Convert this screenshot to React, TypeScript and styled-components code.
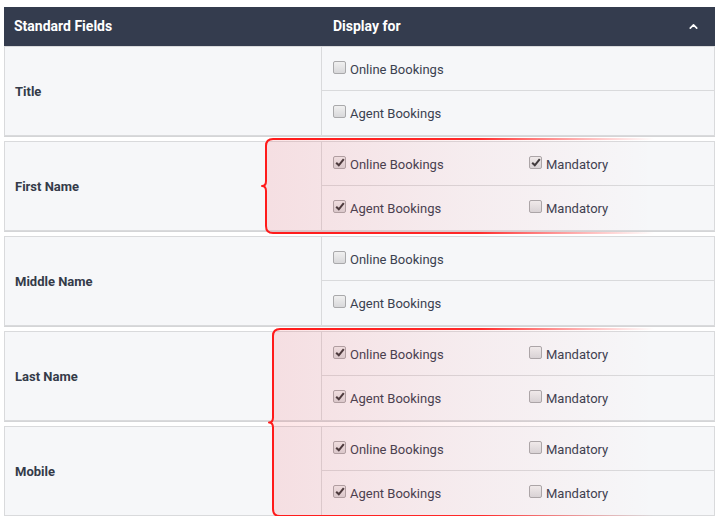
import React from 'react';
import styled, { createGlobalStyle } from 'styled-components';
import { ChevronUp } from 'lucide-react';

const GlobalStyle = createGlobalStyle`
  body {
    margin: 0;
    background: #ffffff;
    font-family: Roboto, "Liberation Sans", Arial, sans-serif;
  }
`;

const Page = styled.div`
  padding: 7px 6px 0 4px;
`;

const Table = styled.div`
  position: relative;
  width: 711px;
`;

const Header = styled.div`
  display: grid;
  grid-template-columns: 317px 1fr auto;
  align-items: center;
  height: 39px;
  padding-bottom: 1px;
  box-sizing: border-box;
  background: #343c4e;
  color: #ffffff;
  font-weight: 700;
  font-size: 14px;
`;

const HeadCell = styled.div<{ pad: number }>`
  padding-left: ${(p) => p.pad}px;
`;

const Caret = styled.div`
  display: flex;
  padding-right: 15px;
  color: #ffffff;
`;

const Groups = styled.div`
  display: flex;
  flex-direction: column;
  gap: 5px;
`;

const Group = styled.div`
  display: grid;
  grid-template-columns: 317px 1fr;
  background: #f6f7f9;
  border: 1px solid #d9dadc;
  box-shadow: 0 1px 0 #d4d5d7;
  box-sizing: border-box;
`;

const FieldName = styled.div`
  display: flex;
  align-items: center;
  padding-left: 10px;
  border-right: 1px solid #d9dadc;
  font-size: 13px;
  font-weight: 700;
  color: #343b49;
`;

const Rows = styled.div`
  display: flex;
  flex-direction: column;
`;

const Row = styled.div`
  display: grid;
  grid-template-columns: 196px 1fr;
  align-items: center;
  height: 43px;
  box-sizing: border-box;
  padding: 2px 0 0 11px;
  & + & {
    height: 45px;
    border-top: 1px solid #d9dadc;
    padding-top: 1px;
  }
`;

const Option = styled.label`
  display: flex;
  align-items: center;
  gap: 4px;
  font-size: 13px;
  color: #3b4150;
`;

const Box = styled.span<{ checked: boolean }>`
  display: inline-flex;
  align-items: center;
  justify-content: center;
  width: 11px;
  height: 11px;
  margin-top: -4px;
  border: 1px solid #a9a9ab;
  border-radius: 2px;
  background: linear-gradient(#f0f0f0, #d8d8da);
`;

const Annotation = styled.svg`
  position: absolute;
  pointer-events: none;
  overflow: visible;
`;

type Field = {
  name: string;
  online: boolean;
  agent: boolean;
  onlineMand?: boolean;
  agentMand?: boolean;
};

const fields: Field[] = [
  { name: 'Title', online: false, agent: false },
  { name: 'First Name', online: true, agent: true, onlineMand: true, agentMand: false },
  { name: 'Middle Name', online: false, agent: false },
  { name: 'Last Name', online: true, agent: true, onlineMand: false, agentMand: false },
  { name: 'Mobile', online: true, agent: true, onlineMand: false, agentMand: false },
];

const Check = ({ label, checked }: { label: string; checked: boolean }) => (
  <Option>
    <Box checked={checked}>
      {checked && (
        <svg width="10" height="9" viewBox="0 0 10 9">
          <path d="M1.2 4.8 L3.8 7.3 L8.8 1.2" fill="none" stroke="#3a3a3c" strokeWidth="2.1" />
        </svg>
      )}
    </Box>
    {label}
  </Option>
);

// red curly-brace callout drawn over the rows it highlights
const Brace = ({ id, x, y, w, h }: { id: string; x: number; y: number; w: number; h: number }) => {
  const m = h / 2;
  const d = `M${w},1 L11,1 Q4,1 4,8 L4,${m - 5} Q4,${m} 0,${m} Q4,${m} 4,${m + 5} L4,${h - 8} Q4,${h - 1} 11,${h - 1} L${w},${h - 1}`;
  return (
    <Annotation style={{ left: x, top: y }} width={w} height={h}>
      <defs>
        <linearGradient id={`${id}s`} x1="0" x2={w} y1="0" y2="0" gradientUnits="userSpaceOnUse">
          <stop offset="0" stopColor="#ff1a1a" />
          <stop offset="0.55" stopColor="#ff2a2a" />
          <stop offset="1" stopColor="#ff6060" stopOpacity="0" />
        </linearGradient>
        <linearGradient id={`${id}f`} x1="0" x2={w} y1="0" y2="0" gradientUnits="userSpaceOnUse">
          <stop offset="0" stopColor="#f03a46" stopOpacity="0.13" />
          <stop offset="0.5" stopColor="#f03a46" stopOpacity="0.06" />
          <stop offset="1" stopColor="#f03a46" stopOpacity="0" />
        </linearGradient>
      </defs>
      <path d={d} fill={`url(#${id}f)`} stroke={`url(#${id}s)`} strokeWidth="2" strokeLinejoin="round" />
    </Annotation>
  );
};

export default function App() {
  return (
    <Page>
      <GlobalStyle />
      <Table>
        <Header>
          <HeadCell pad={10}>Standard Fields</HeadCell>
          <HeadCell pad={12}>Display for</HeadCell>
          <Caret>
            <ChevronUp size={13} strokeWidth={3} />
          </Caret>
        </Header>
        <Groups>
          {fields.map((f) => (
            <Group key={f.name}>
              <FieldName>{f.name}</FieldName>
              <Rows>
                <Row>
                  <Check label="Online Bookings" checked={f.online} />
                  {f.onlineMand !== undefined && <Check label="Mandatory" checked={f.onlineMand} />}
                </Row>
                <Row>
                  <Check label="Agent Bookings" checked={f.agent} />
                  {f.agentMand !== undefined && <Check label="Mandatory" checked={f.agentMand} />}
                </Row>
              </Rows>
            </Group>
          ))}
        </Groups>
        <Brace id="a1" x={258} y={131} w={392} h={96} />
        <Brace id="a2" x={265} y={321} w={385} h={189} />
      </Table>
    </Page>
  );
}
